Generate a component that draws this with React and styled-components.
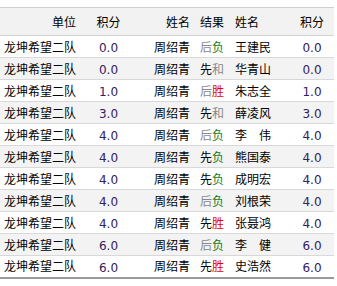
import React from 'react'
import styled, { createGlobalStyle } from 'styled-components'

const GlobalStyle = createGlobalStyle`
  body {
    margin: 0;
    padding-top: 7px;
    background: #fff;
    font-family: "Noto Sans CJK SC", "DejaVu Sans", sans-serif;
    font-size: 12px;
    color: #000;
  }
`

const rows = [
  ['龙坤希望二队', '0.0', '周绍青', '后', '负', '王建民', '0.0'],
  ['龙坤希望二队', '0.0', '周绍青', '先', '和', '华青山', '0.0'],
  ['龙坤希望二队', '1.0', '周绍青', '后', '胜', '朱志全', '1.0'],
  ['龙坤希望二队', '3.0', '周绍青', '先', '和', '薛凌风', '3.0'],
  ['龙坤希望二队', '4.0', '周绍青', '后', '负', '李　伟', '4.0'],
  ['龙坤希望二队', '4.0', '周绍青', '先', '负', '熊国泰', '4.0'],
  ['龙坤希望二队', '4.0', '周绍青', '先', '负', '成明宏', '4.0'],
  ['龙坤希望二队', '4.0', '周绍青', '后', '负', '刘根荣', '4.0'],
  ['龙坤希望二队', '4.0', '周绍青', '先', '胜', '张聂鸿', '4.0'],
  ['龙坤希望二队', '6.0', '周绍青', '后', '负', '李　健', '6.0'],
  ['龙坤希望二队', '6.0', '周绍青', '先', '胜', '史浩然', '6.0'],
]

const resultColor = { 负: '#167a16', 胜: '#e00000', 和: '#888' }

const Table = styled.table`
  width: 334px;
  border-collapse: collapse;
  border-top: 1px solid #d0d0d0;
  border-bottom: 2px solid #9a9a9a;
  table-layout: fixed;
  col:nth-child(1) { width: 82px; }
  col:nth-child(2) { width: 53px; }
  col:nth-child(3) { width: 61px; }
  col:nth-child(4) { width: 35px; }
  col:nth-child(5) { width: 59px; }
  col:nth-child(6) { width: 44px; }
`

const HeadRow = styled.tr`
  height: 28px;
  background: #f2f2f2;
  border-bottom: 1px solid #d4d4d4;
`

const Row = styled.tr`
  height: 22px;
  background: ${p => (p.$alt ? '#f3f3f3' : '#fff')};
  border-bottom: 1px solid #d8d8d8;
`

const Cell = styled.td`
  padding: 0 ${p => (p.$align === 'right' ? '6px' : '0')} 0 ${p => (p.$align === 'left' ? '4px' : '0')};
  text-align: ${p => p.$align || 'center'};
  white-space: nowrap;
  line-height: 14px;
  vertical-align: middle;
`

const HeadCell = styled(Cell).attrs({ as: 'th' })`
  font-weight: normal;
`

const Num = styled.span`
  font-family: "DejaVu Sans", Verdana, sans-serif;
  color: #33205e;
  position: relative;
  top: 1px;
`

const Side = styled.span`
  color: ${p => (p.$first ? '#000' : '#888')};
`

const Result = styled.span`
  color: ${p => p.$c};
`

export default function App() {
  return (
    <>
      <GlobalStyle />
      <Table>
        <colgroup>
          <col /><col /><col /><col /><col /><col />
        </colgroup>
        <thead>
          <HeadRow>
            <HeadCell $align="right">单位</HeadCell>
            <HeadCell>积分</HeadCell>
            <HeadCell $align="right">姓名</HeadCell>
            <HeadCell $align="left">结果</HeadCell>
            <HeadCell $align="left">姓名</HeadCell>
            <HeadCell>积分</HeadCell>
          </HeadRow>
        </thead>
        <tbody>
          {rows.map((r, i) => (
            <Row key={i} $alt={i % 2 === 1}>
              <Cell $align="left">{r[0]}</Cell>
              <Cell><Num>{r[1]}</Num></Cell>
              <Cell $align="right">{r[2]}</Cell>
              <Cell $align="left">
                <Side $first={r[3] === '先'}>{r[3]}</Side>
                <Result $c={resultColor[r[4]]}>{r[4]}</Result>
              </Cell>
              <Cell $align="left">{r[5]}</Cell>
              <Cell><Num>{r[6]}</Num></Cell>
            </Row>
          ))}
        </tbody>
      </Table>
    </>
  )
}
